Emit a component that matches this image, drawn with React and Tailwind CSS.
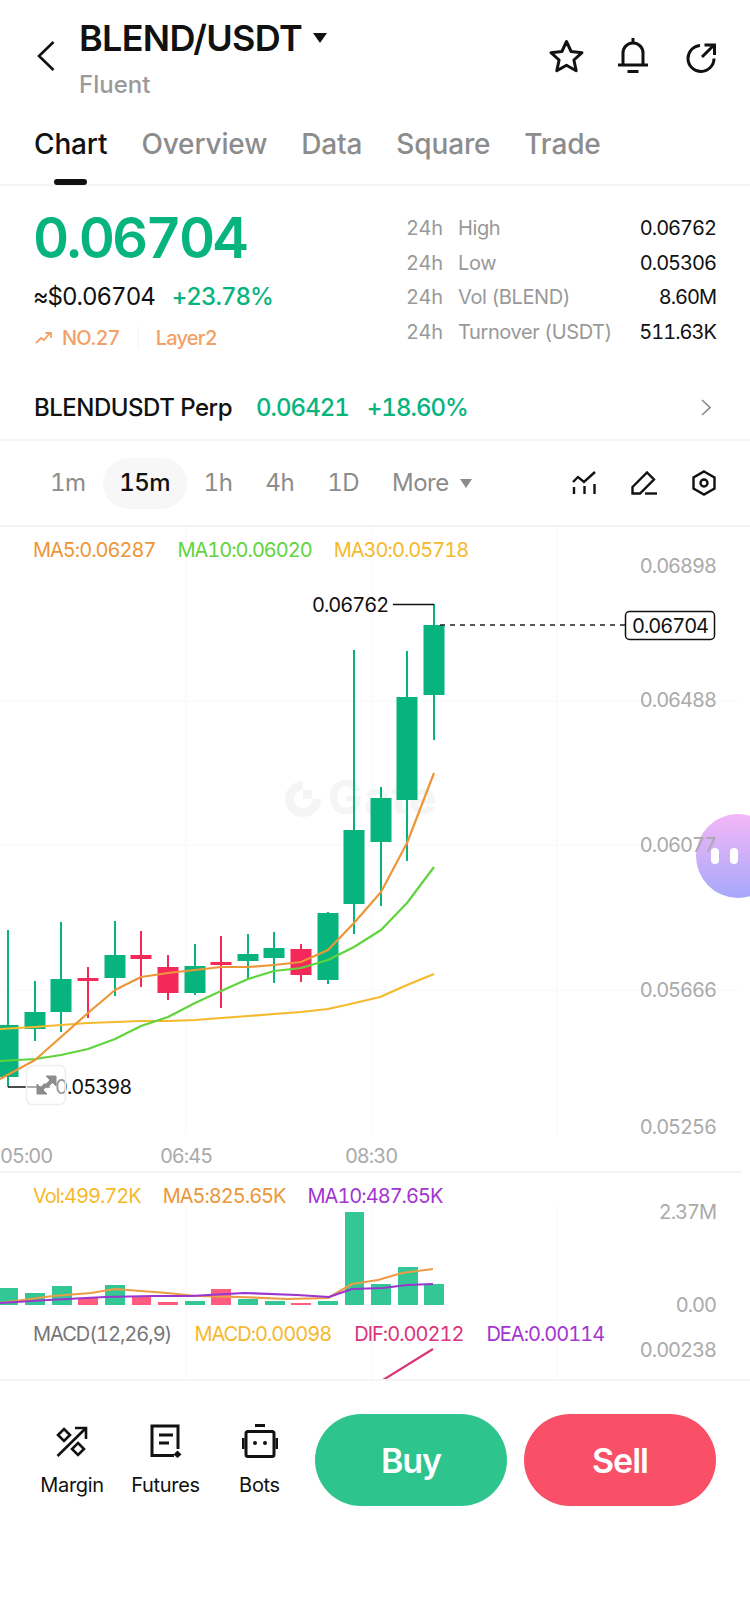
import React from 'react';

const green = '#08b47e';
const red = '#f4295a';

// x, body top, body bottom, wick top, wick bottom, colour
const candles = [
  [8, 1025, 1077, 930, 1087, green],
  [35, 1012, 1029, 981, 1041, green],
  [61, 979, 1012, 922, 1032, green],
  [88, 978, 981, 967, 1018, red],
  [115, 955, 978, 921, 996, green],
  [141, 955, 959, 931, 987, red],
  [168, 967, 993, 955, 1000, red],
  [195, 966, 993, 944, 995, green],
  [221, 962, 965, 936, 1008, red],
  [248, 954, 961, 934, 979, green],
  [274, 948, 958, 932, 983, green],
  [301, 949, 975, 944, 982, red],
  [328, 913, 980, 912, 984, green],
  [354, 830, 904, 650, 934, green],
  [381, 798, 842, 787, 906, green],
  [407, 697, 800, 651, 861, green],
  [434, 625, 695, 604, 740, green],
];

const ma5 = '0,1079 35,1060 61,1037 88,1013 115,990 141,977 168,973 195,970 221,967 248,967 274,965 301,962 328,950 354,923 381,892 407,843 434,773';
const ma10 = '0,1061 35,1059 61,1055 88,1049 115,1039 141,1026 168,1017 195,1003 221,991 248,979 274,971 301,968 328,960 354,947 381,930 407,903 434,867';
const ma30 = '0,1029 35,1027 61,1025 88,1023 115,1022 141,1021 168,1021 195,1020 221,1018 248,1016 274,1014 301,1012 328,1009 346,1005 380,997 407,985 434,974';

// left, right, top
const volumes = [
  [0, 18, 1288, 'g'], [25, 45, 1293, 'g'], [52, 72, 1286, 'g'], [78, 98, 1298, 'r'], [105, 125, 1285, 'g'],
  [132, 151, 1297, 'r'], [158, 178, 1302, 'r'], [185, 205, 1301, 'g'], [211, 231, 1289, 'r'], [238, 258, 1299, 'g'],
  [265, 285, 1301, 'g'], [291, 311, 1303, 'r'], [318, 338, 1301, 'g'], [345, 364, 1212, 'g'], [371, 391, 1284, 'g'],
  [398, 418, 1267, 'g'], [424, 444, 1284, 'g'],
];
const volMa5 = '0,1303 53,1296 91,1293 115,1289 167,1293 196,1296 239,1297 287,1299 328,1298 352,1284 378,1280 402,1273 433,1269';
const volMa10 = '0,1303 48,1300 105,1297 153,1296 191,1296 244,1293 297,1295 329,1297 352,1289 383,1288 407,1285 433,1284';

const stats = [
  ['High', '0.06762'],
  ['Low', '0.05306'],
  ['Vol (BLEND)', '8.60M'],
  ['Turnover (USDT)', '511.63K'],
];

const GridLines = ({ top, bottom }) => (
  <g stroke="#f7f7f7" strokeWidth="1">
    <line x1="186" y1={top} x2="186" y2={bottom} />
    <line x1="372" y1={top} x2="372" y2={bottom} />
    <line x1="557" y1={top} x2="557" y2={bottom} />
  </g>
);

const AxisLabel = ({ y, children }) => (
  <text x="716" y={y} textAnchor="end" fontSize="20" fill="#aaaaaa" dominantBaseline="central">{children}</text>
);

const MainChart = () => (
  <svg className="absolute inset-0 w-full h-full tracking-[-1px]" viewBox="0 527 750 646">
    <GridLines top={527} bottom={1135} />
    <g stroke="#f8f8f8" strokeWidth="1">
      <line x1="0" y1="701" x2="741" y2="701" />
      <line x1="0" y1="845" x2="696" y2="845" />
      <line x1="0" y1="990" x2="741" y2="990" />
    </g>
    <line x1="0" y1="1172" x2="741" y2="1172" stroke="#efefef" strokeWidth="1.5" />

    {/* watermark */}
    <g fill="#f4f5f5">
      <path d="M303 781a18 18 0 1 0 18 18h-9a9 9 0 1 1-9-9z" />
      <path d="M303 790h9v9h-9z" />
      <text x="328" y="814" fontSize="46" fontWeight="700" letterSpacing="1">Gate</text>
    </g>

    <AxisLabel y={566}>0.06898</AxisLabel>
    <AxisLabel y={700}>0.06488</AxisLabel>
    <AxisLabel y={845}>0.06077</AxisLabel>
    <AxisLabel y={990}>0.05666</AxisLabel>
    <AxisLabel y={1127}>0.05256</AxisLabel>
    <text x="0" y="1156" fontSize="20" fill="#aaaaaa" dominantBaseline="central">05:00</text>
    <text x="186" y="1156" fontSize="20" fill="#aaaaaa" textAnchor="middle" dominantBaseline="central">06:45</text>
    <text x="371" y="1156" fontSize="20" fill="#aaaaaa" textAnchor="middle" dominantBaseline="central">08:30</text>

    {candles.map(([x, top, bottom, wickTop, wickBottom, color]) => (
      <g key={x} fill={color}>
        <rect x={x - 1} y={wickTop} width="2" height={wickBottom - wickTop} />
        <rect x={x - 10.5} y={top} width="21" height={bottom - top} />
      </g>
    ))}

    <g fill="none" strokeWidth="2.200" strokeLinejoin="round">
      <polyline points={ma30} stroke="#f5b92c" />
      <polyline points={ma10} stroke="#5fd43c" />
      <polyline points={ma5} stroke="#ec9638" />
    </g>

    {/* high marker */}
    <text x="312" y="605" fontSize="20" fill="#111111" dominantBaseline="central">0.06762</text>
    <polyline points="393,604.5 434,604.5" fill="none" stroke="#111111" strokeWidth="1.5" />

    {/* last price */}
    <line x1="440" y1="625" x2="625" y2="625" stroke="#222222" strokeWidth="1.5" strokeDasharray="5 5" />
    <rect x="625.5" y="611.5" width="89" height="28" rx="4" fill="#ffffff" stroke="#111111" strokeWidth="1.5" />
    <text x="670" y="626" fontSize="20" fill="#111111" textAnchor="middle" dominantBaseline="central">0.06704</text>

    {/* low marker */}
    <polyline points="8,1087 50,1087" fill="none" stroke="#111111" strokeWidth="1.5" />
    <text x="55" y="1087" fontSize="20" fill="#111111" dominantBaseline="central">0.05398</text>

    {/* expand button */}
    <rect x="26.5" y="1065.5" width="39" height="39" rx="6" fill="#ffffff" fillOpacity="0.55" stroke="#eeeeee" strokeWidth="1.5" />
    <g fill="#8c8c8c" stroke="#8c8c8c" strokeWidth="4">
      <path d="M46 1076h10v10z" strokeWidth="1" />
      <path d="M52 1080.500l-6 6" />
      <path d="M37 1084v10h10z" strokeWidth="1" />
      <path d="M41 1089.500l5-5" />
    </g>
  </svg>
);

const VolumeChart = () => (
  <svg className="absolute inset-0 w-full h-full tracking-[-1px]" viewBox="0 1173 750 139">
    <GridLines top={1205} bottom={1312} />
    <AxisLabel y={1212}>2.37M</AxisLabel>
    <AxisLabel y={1305}>0.00</AxisLabel>
    {volumes.map(([left, right, top, side]) => (
      <rect key={left} x={left} y={top} width={right - left} height={1305 - top} fill={side === 'g' ? '#33c795' : '#ff5c80'} />
    ))}
    <g fill="none" strokeWidth="2.200" strokeLinejoin="round">
      <polyline points={volMa5} stroke="#ec9c45" />
      <polyline points={volMa10} stroke="#9b35d0" />
    </g>
  </svg>
);

const MacdChart = () => (
  <svg className="absolute inset-0 w-full h-full tracking-[-1px]" viewBox="0 1312 750 67">
    <GridLines top={1312} bottom={1379} />
    <AxisLabel y={1350}>0.00238</AxisLabel>
    <line x1="383" y1="1380" x2="433" y2="1349" stroke="#d9347a" strokeWidth="2.200" />
  </svg>
);

const Star = () => (
  <svg width="35" height="34" viewBox="0 0 35 34" fill="none" stroke="#111111" strokeWidth="3" strokeLinejoin="round">
    <path d="M17.500 2.500l4.600 10 10.900 1.200-8.100 7.300 2.300 10.700-9.700-5.400-9.700 5.400 2.300-10.700L2 13.700l10.900-1.200z" />
  </svg>
);

const Bell = () => (
  <svg width="30" height="35" viewBox="0 0 30 35" fill="none" stroke="#111111" strokeWidth="3">
    <path d="M5 27V15a10 10 0 0 1 20 0v12" />
    <path d="M0 27h30" />
    <path d="M15 0v4" />
    <path d="M9.500 33.500h11" />
  </svg>
);

const Share = () => (
  <svg width="31" height="30" viewBox="0 0 31 30" fill="none" stroke="#111111" strokeWidth="3">
    <path d="M15 2.500a13 13 0 1 0 14 13" />
    <path d="M17 14L28.500 2.500" />
    <path d="M19.500 2h10v10" />
  </svg>
);

const IndicatorIcon = () => (
  <svg width="24" height="24" viewBox="0 0 24 24" fill="none" stroke="#111111" strokeWidth="2.400">
    <path d="M1 11l5-5 6 5L23 1" />
    <path d="M2 16v7M12.500 15v8M22.500 13v10" />
  </svg>
);

const PencilIcon = () => (
  <svg width="26" height="24" viewBox="0 0 26 24" fill="none" stroke="#111111" strokeWidth="2.400">
    <path d="M1.500 16L16 1.500l7 7L9 22.500H1.500z" />
    <path d="M14 22.500h12" />
  </svg>
);

const HexIcon = () => (
  <svg width="24" height="26" viewBox="0 0 24 26" fill="none" stroke="#111111" strokeWidth="2.400">
    <path d="M12 1.500l10.500 6v11l-10.500 6-10.500-6v-11z" />
    <circle cx="12" cy="13" r="3.500" />
  </svg>
);

const MarginIcon = () => (
  <svg width="32" height="31" viewBox="0 0 32 31" fill="none" stroke="#111111" strokeWidth="2.600">
    <path d="M8 3l6 6-6 6-6-6z" />
    <path d="M22 17l6 6-6 6-6-6z" />
    <path d="M1.500 30L30 2" />
    <path d="M19 2h11v11" />
  </svg>
);

const FuturesIcon = () => (
  <svg width="32" height="34" viewBox="0 0 32 34" fill="none" stroke="#111111" strokeWidth="3">
    <path d="M28 25V2H2v29.500h22" />
    <path d="M9 11h14M9 19h10" />
    <path d="M27.500 26.500l4 4-4 3.500-4-3.500z" fill="#111111" stroke="none" />
  </svg>
);

const BotsIcon = () => (
  <svg width="36" height="34" viewBox="0 0 36 34" fill="none" stroke="#111111" strokeWidth="3">
    <path d="M13 1.500h10" />
    <rect x="4" y="7.500" width="28" height="25" rx="2" />
    <path d="M1 14v11M35 14v11" />
    <circle cx="13" cy="19" r="2" fill="#111111" stroke="none" />
    <circle cx="23" cy="19" r="2" fill="#111111" stroke="none" />
  </svg>
);

const Tool = ({ label, icon, className }) => (
  <div className={`flex flex-col items-center ${className}`}>
    <div className="flex h-[34px] items-center">{icon}</div>
    <span className="mt-[15px] text-[20px] leading-[24px] tracking-[-0.3px] text-[#111111]">{label}</span>
  </div>
);

const App = () => {
  return (
    <div className="relative w-[750px] h-[1623px] overflow-hidden bg-white font-['Inter',sans-serif] tabular-nums">
      {/* Header */}
      <header className="flex h-[112px] pl-[37px] pr-[34px]">
        <svg className="mt-[41px]" width="18" height="30" viewBox="0 0 18 30" fill="none" stroke="#111111" strokeWidth="2.600">
          <path d="M16.500 1L2 15l14.500 14" />
        </svg>
        <div className="ml-[24px] mt-[16px]">
          <div className="flex items-center h-[44px]">
            <span className="text-[36px] leading-[44px] font-semibold tracking-[-0.700px] text-[#111111]">BLEND/USDT</span>
            <span className="ml-[11px] w-0 h-0 border-x-[7px] border-x-transparent border-t-[10px] border-t-[#111111]" />
          </div>
          <div className="mt-[10px] text-[24px] leading-[30px] font-medium text-[#9a9a9a]">Fluent</div>
        </div>
        <div className="ml-auto mt-[38px] flex items-start">
          <div className="mt-[1px]"><Star /></div>
          <div className="ml-[34px]"><Bell /></div>
          <div className="ml-[37px] mt-[5px]"><Share /></div>
        </div>
      </header>

      {/* Tabs */}
      <nav className="flex h-[74px] gap-[34px] px-[34px] pt-[12px] border-b-2 border-[#f4f4f4] text-[28px] leading-[40px] font-medium tracking-[-0.150px] text-[#8c8c8c]">
        <div className="relative text-[#111111]">
          Chart
          <span className="absolute left-[20px] top-[55px] w-[33px] h-[6px] rounded-full bg-[#111111]" />
        </div>
        <div>Overview</div>
        <div>Data</div>
        <div>Square</div>
        <div>Trade</div>
      </nav>

      {/* Price */}
      <section className="flex justify-between h-[184px] pl-[33px] pr-[34px] pt-[22px]">
        <div>
          <div className="text-[56px] leading-[60px] font-semibold tracking-[-2.800px] text-[#08b47e]">0.06704</div>
          <div className="mt-[14px] flex h-[30px] items-center text-[24px] leading-[30px] tracking-[-1px]">
            <span className="text-[#111111]">≈$0.06704</span>
            <span className="ml-[17px] font-medium text-[#08b47e]">+23.78%</span>
          </div>
          <div className="mt-[12px] flex h-[28px] items-center text-[20px] font-medium tracking-[-0.800px] text-[#f3a066]">
            <svg width="17" height="12" viewBox="0 0 17 12" fill="none" stroke="#f3a066" strokeWidth="1.800" className="ml-[2px]">
              <path d="M1 11l5-5 3 2 6-7M10.500 1H16v5" />
            </svg>
            <span className="ml-[10px]">NO.27</span>
            <span className="ml-[18px] w-px h-[22px] bg-[#f4f4f4]" />
            <span className="ml-[17px]">Layer2</span>
          </div>
        </div>
        <div className="w-[310px] pt-[3px]">
          {stats.map(([label, value]) => (
            <div key={label} className="flex h-[34.500px] items-center text-[20px] leading-[24px] tracking-[-0.400px]">
              <span className="w-[52px] text-[#999999]">24h</span>
              <span className="text-[#999999]">{label}</span>
              <span className="ml-auto tracking-[-1px] text-[#111111]">{value}</span>
            </div>
          ))}
        </div>
      </section>

      {/* Perp */}
      <div className="flex items-center h-[71px] px-[34px] pt-[6px] border-b-2 border-[#f4f4f4] text-[24px] font-medium">
        <span className="tracking-[-0.500px] text-[#111111]">BLENDUSDT Perp</span>
        <span className="ml-[24px] tracking-[-1px] text-[#08b47e]">0.06421</span>
        <span className="ml-[18px] tracking-[-1px] text-[#08b47e]">+18.60%</span>
        <svg className="ml-auto mr-[5px]" width="10" height="17" viewBox="0 0 10 17" fill="none" stroke="#8c8c8c" strokeWidth="1.600">
          <path d="M1 1l8 7.500-8 7.500" />
        </svg>
      </div>

      {/* Timeframes */}
      <div className="flex items-center h-[86px] pl-[50px] pr-[34px] border-b-2 border-[#f4f4f4] text-[24px] text-[#8c8c8c]">
        <div className="flex items-center gap-[33px] tracking-[-0.500px]">
          <span>1m</span>
          <span className="flex items-center justify-center w-[84px] h-[51px] -mx-[16px] rounded-[26px] bg-[#f7f7f7] font-medium text-[#111111]">15m</span>
          <span>1h</span>
          <span>4h</span>
          <span>1D</span>
          <span className="flex items-center">
            More
            <span className="ml-[11px] w-0 h-0 border-x-[6px] border-x-transparent border-t-[9px] border-t-[#8c8c8c]" />
          </span>
        </div>
        <div className="ml-auto flex items-center gap-[35px]">
          <IndicatorIcon />
          <PencilIcon />
          <HexIcon />
        </div>
      </div>

      {/* Candles */}
      <div className="relative h-[646px]">
        <div className="absolute top-[287px] -right-[30px] w-[84px] h-[84px] rounded-full bg-gradient-to-b from-[#f3b6f6] to-[#a6a8fb] flex items-center pl-[15px] gap-[11px]">
          <span className="w-[8px] h-[16px] rounded-full bg-white" />
          <span className="w-[8px] h-[16px] rounded-full bg-white" />
        </div>
        <MainChart />
        <div className="relative flex h-[46px] items-center gap-[22px] pl-[33px] text-[20px] tracking-[-1px]">
          <span className="text-[#ec9638]">MA5:0.06287</span>
          <span className="text-[#5fd43c]">MA10:0.06020</span>
          <span className="text-[#f5b92c]">MA30:0.05718</span>
        </div>
      </div>

      {/* Volume */}
      <div className="relative h-[139px]">
        <VolumeChart />
        <div className="relative flex h-[46px] items-center gap-[22px] pl-[33px] text-[20px] tracking-[-1px]">
          <span className="text-[#f5b92c]">Vol:499.72K</span>
          <span className="text-[#ec9638]">MA5:825.65K</span>
          <span className="text-[#a335d0]">MA10:487.65K</span>
        </div>
      </div>

      {/* MACD */}
      <div className="relative h-[69px] border-b-2 border-[#f4f4f4]">
        <MacdChart />
        <div className="relative flex h-[44px] items-center gap-[23px] pl-[33px] text-[20px] tracking-[-1px]">
          <span className="text-[#777777]">MACD(12,26,9)</span>
          <span className="text-[#f5b92c]">MACD:0.00098</span>
          <span className="text-[#d9347a]">DIF:0.00212</span>
          <span className="text-[#a335d0]">DEA:0.00114</span>
        </div>
      </div>

      {/* Bottom bar */}
      <footer className="flex pt-[33px] pr-[34px]">
        <Tool label="Margin" icon={<MarginIcon />} className="ml-[41px] w-[62px] mt-[10px]" />
        <Tool label="Futures" icon={<FuturesIcon />} className="ml-[28px] w-[69px] mt-[10px]" />
        <Tool label="Bots" icon={<BotsIcon />} className="ml-[39px] w-[41px] mt-[10px]" />
        <button className="ml-[35px] w-[192px] h-[92px] rounded-full bg-[#2dc48d] text-[34px] font-semibold tracking-[-1px] text-white">Buy</button>
        <button className="ml-[17px] w-[192px] h-[92px] rounded-full bg-[#f95068] text-[34px] font-semibold tracking-[-1px] text-white">Sell</button>
      </footer>
    </div>
  );
};

export default App;
